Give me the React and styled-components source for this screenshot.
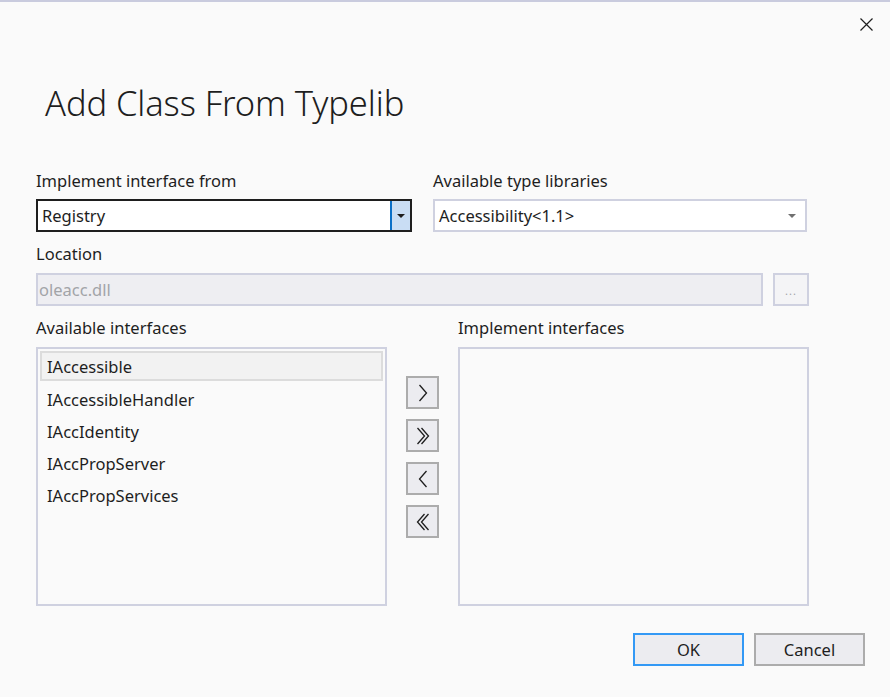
import React from 'react';
import styled, { createGlobalStyle } from 'styled-components';

const GlobalStyle = createGlobalStyle`
  html, body {
    margin: 0;
    padding: 0;
    background: #fafafa;
  }
  body {
    font-family: 'Noto Sans', 'Open Sans', sans-serif;
    color: #1e1e1e;
  }
`;

const Dialog = styled.div`
  width: 890px;
  height: 697px;
  box-sizing: border-box;
  background: #fafafa;
  border-top: 2px solid #c9cbde;
  display: flex;
  flex-direction: column;
  padding: 0 25px 0 36px;
`;

const TitleBar = styled.div`
  height: 44px;
  display: flex;
  justify-content: flex-end;
  align-items: center;
  margin-right: -13px;
`;

const CloseButton = styled.button`
  width: 24px;
  height: 24px;
  border: none;
  background: transparent;
  padding: 0;
  display: flex;
  align-items: center;
  justify-content: center;
`;

const Title = styled.h1`
  margin: 37px 0 0 9px;
  font-size: 34.5px;
  font-weight: 300;
  line-height: 40px;
  letter-spacing: -0.1px;
`;

const Form = styled.div`
  width: 773px;
  display: flex;
  flex-direction: column;
`;

const Row = styled.div`
  display: flex;
  gap: ${(p) => p.gap || 0}px;
  margin-top: ${(p) => p.mt || 0}px;
`;

const Field = styled.div`
  display: flex;
  flex-direction: column;
  width: ${(p) => p.width}px;
  margin-top: ${(p) => p.mt || 0}px;
`;

const Label = styled.div`
  font-size: 16.5px;
  line-height: 20px;
  height: 20px;
  margin-bottom: ${(p) => p.mb || 8}px;
`;

const Combo = styled.div`
  height: 33px;
  box-sizing: border-box;
  display: flex;
  align-items: stretch;
  background: #fff;
  border: ${(p) => (p.focused ? '2px solid #1e1e1e' : '2px solid #cfd1e0')};
  font-size: 16.5px;
`;

const ComboText = styled.div`
  flex: 1;
  display: flex;
  align-items: center;
  padding-left: 4px;
`;

const DropButton = styled.div`
  width: 18px;
  display: flex;
  align-items: center;
  justify-content: center;
  background: ${(p) => (p.active ? '#c9ddf4' : 'transparent')};
  border-left: ${(p) => (p.active ? '2px solid #0a6fc7' : 'none')};
  margin-right: ${(p) => (p.active ? 0 : 4)}px;
`;

const Arrow = styled.div`
  width: 0;
  height: 0;
  border-left: 4px solid transparent;
  border-right: 4px solid transparent;
  border-top: 4px solid ${(p) => p.color};
`;

const TextInput = styled.div`
  flex: 1;
  height: 33px;
  box-sizing: border-box;
  background: #eeeef2;
  border: 2px solid #cfd1e0;
  color: #a2a4a8;
  font-size: 16.5px;
  display: flex;
  align-items: center;
  padding-left: 1px;
`;

const BrowseButton = styled.div`
  width: 36px;
  height: 33px;
  box-sizing: border-box;
  background: #f4f4f6;
  border: 2px solid #cfd1e0;
  color: #a2a4a8;
  font-size: 11px;
  display: flex;
  align-items: flex-end;
  justify-content: center;
  padding-bottom: 6px;
  letter-spacing: 1px;
`;

const ListBox = styled.div`
  width: 351px;
  height: 259px;
  box-sizing: border-box;
  border: 2px solid #cfd1e0;
  background: #fafafa;
  padding: 2px;
  display: flex;
  flex-direction: column;
`;

const ListItem = styled.div`
  height: ${(p) => (p.selected ? 30 : 32)}px;
  margin-bottom: ${(p) => (p.selected ? 2 : 0)}px;
  box-sizing: border-box;
  font-size: 16.5px;
  display: flex;
  align-items: center;
  padding-left: 5px;
  border: 2px solid ${(p) => (p.selected ? '#dcdcdc' : 'transparent')};
  background: ${(p) => (p.selected ? '#f2f2f2' : 'transparent')};
`;

const MoveColumn = styled.div`
  display: flex;
  flex-direction: column;
  gap: 10px;
  padding-top: 58px;
  margin: 0 19px;
`;

const MoveButton = styled.button`
  width: 33px;
  height: 33px;
  box-sizing: border-box;
  padding: 0;
  background: #ececf0;
  border: 2px solid #acacac;
  display: flex;
  align-items: center;
  justify-content: center;
`;

const Footer = styled.div`
  display: flex;
  justify-content: flex-end;
  gap: 10px;
  margin-top: 27px;
`;

const DialogButton = styled.button`
  width: 111px;
  height: 33px;
  box-sizing: border-box;
  background: #ececf0;
  border: 2px solid ${(p) => (p.primary ? '#3399f5' : '#acacac')};
  font-family: 'Noto Sans', 'Open Sans', sans-serif;
  font-size: 16.5px;
  color: #1e1e1e;
  padding: 0;
`;

const Chevron = ({ dir = 'right', double = false }) => {
  const flip = dir === 'left' ? 'scale(-1,1) translate(-20,0)' : undefined;
  return (
    <svg width="20" height="22" viewBox="0 0 20 22">
      <g transform={flip} fill="none" stroke="#1e1e1e" strokeWidth="1.3">
        {double ? (
          <>
            <path d="M4.5 3 L11.5 11 L4.5 19" />
            <path d="M8.5 3 L15.5 11 L8.5 19" />
          </>
        ) : (
          <path d="M6.5 3 L13.5 11 L6.5 19" />
        )}
      </g>
    </svg>
  );
};

const available = [
  'IAccessible',
  'IAccessibleHandler',
  'IAccIdentity',
  'IAccPropServer',
  'IAccPropServices',
];

const App = () => (
  <>
    <GlobalStyle />
    <Dialog>
      <TitleBar>
        <CloseButton aria-label="Close">
          <svg width="13" height="13" viewBox="0 0 13 13">
            <path d="M0.5 0.5 L12.5 12.5 M12.5 0.5 L0.5 12.5" stroke="#1e1e1e" strokeWidth="1.2" />
          </svg>
        </CloseButton>
      </TitleBar>
      <Title>Add Class From Typelib</Title>
      <Form>
        <Row gap={21} mt={48}>
          <Field width={376}>
            <Label>Implement interface from</Label>
            <Combo focused>
              <ComboText>Registry</ComboText>
              <DropButton active>
                <Arrow color="#1e1e1e" />
              </DropButton>
            </Combo>
          </Field>
          <Field width={374}>
            <Label>Available type libraries</Label>
            <Combo>
              <ComboText>Accessibility&lt;1.1&gt;</ComboText>
              <DropButton>
                <Arrow color="#707070" />
              </DropButton>
            </Combo>
          </Field>
        </Row>
        <Field width={773} mt={12}>
          <Label mb={9}>Location</Label>
          <Row gap={10}>
            <TextInput>oleacc.dll</TextInput>
            <BrowseButton>...</BrowseButton>
          </Row>
        </Field>
        <Row mt={12}>
          <Field width={351}>
            <Label mb={9}>Available interfaces</Label>
            <ListBox>
              {available.map((name, i) => (
                <ListItem key={name} selected={i === 0}>
                  {name}
                </ListItem>
              ))}
            </ListBox>
          </Field>
          <MoveColumn>
            <MoveButton aria-label="Add">
              <Chevron />
            </MoveButton>
            <MoveButton aria-label="Add all">
              <Chevron double />
            </MoveButton>
            <MoveButton aria-label="Remove">
              <Chevron dir="left" />
            </MoveButton>
            <MoveButton aria-label="Remove all">
              <Chevron dir="left" double />
            </MoveButton>
          </MoveColumn>
          <Field width={351}>
            <Label mb={9}>Implement interfaces</Label>
            <ListBox />
          </Field>
        </Row>
      </Form>
      <Footer>
        <DialogButton primary>OK</DialogButton>
        <DialogButton>Cancel</DialogButton>
      </Footer>
    </Dialog>
  </>
);

export default App;
